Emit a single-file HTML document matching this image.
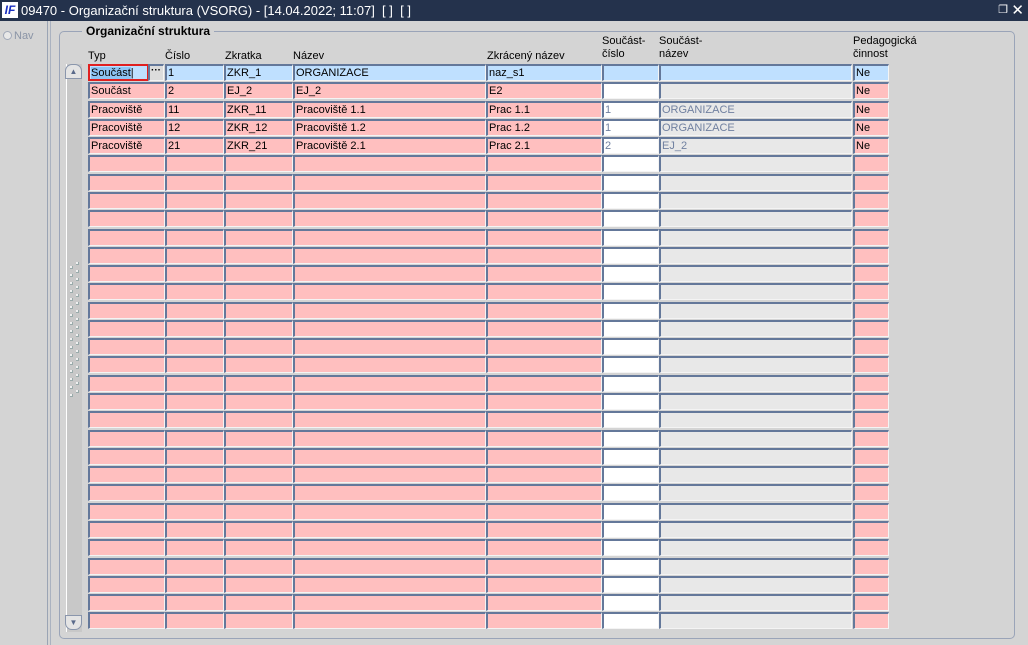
<!DOCTYPE html>
<html><head><meta charset="utf-8">
<style>
*{box-sizing:border-box;margin:0;padding:0}
body{width:1028px;height:645px;background:#d4d4d4;font-family:"Liberation Sans",Arial,sans-serif;font-size:12px;color:#000;position:relative;overflow:hidden}
#tb{position:absolute;left:0;top:0;width:1028px;height:21px;background:#24324c;color:#fff;font-size:13px;line-height:21px}
#logo{position:absolute;left:2px;top:2px;width:16px;height:16px;background:#fff;color:#1a2fc0;font-weight:bold;font-style:italic;font-size:12px;line-height:16px;text-align:center}
#tt{position:absolute;left:21px;top:0}
#lp{position:absolute;left:0;top:21px;width:48px;height:624px;border-right:1px solid #9aa4b4}
#lp2{position:absolute;left:50px;top:21px;width:1px;height:624px;background:#aab2c0}
#nav{position:absolute;left:3px;top:30px;color:#8a94a6;font-size:11px}
#nav i{display:inline-block;width:9px;height:9px;border-radius:50%;border:1px solid #a0a8b8;background:#e8e8e8;vertical-align:-1px;margin-right:2px}
#fr{position:absolute;left:59px;top:31px;width:956px;height:608px;border:1px solid #9aa4b8;border-radius:5px}
#frl{position:absolute;left:82px;top:24px;background:#d4d4d4;padding:0 4px;font-weight:bold;font-size:12px}
.h{position:absolute;font-size:11px;line-height:13px}
#sb{position:absolute;left:66px;top:64px;width:16px;height:568px;background:#c8c8c8;border-left:1px solid #fff}
.sbb{position:absolute;left:65px;width:17px;height:15px;border:1px solid #8a96ac;background:#e4e4e4;color:#5a6a8a;font-size:8px;text-align:center;line-height:13px}
.c{position:absolute;height:17px;border-top:2px solid #64789a;border-left:2px solid #64789a;border-right:1px solid #f4f4f4;border-bottom:1px solid #f4f4f4;line-height:14px;padding-left:1px;white-space:nowrap;overflow:hidden;font-size:11px}
.p{background:#ffbfbf}.b{background:#bfe0ff}.g{background:#e8e8e8}.w{background:#fff}
.gt{color:#7080a0}
.dot{position:absolute;width:3px;height:3px;background:#f0f0f0;border-right:1px solid #9aa;border-bottom:1px solid #9aa}
</style></head><body>
<div id="tb"><div id="logo">IF</div><div id="tt">09470 - Organizační struktura (VSORG) - [14.04.2022; 11:07]&nbsp; [ ]&nbsp; [ ]</div>
<div style="position:absolute;right:20px;top:0;font-size:11px">&#x2750;</div><div style="position:absolute;right:4px;top:0;font-size:15px">✕</div></div>
<div id="lp"></div><div id="lp2"></div>
<div id="nav"><i></i>Nav</div>
<div id="fr"></div>
<div id="frl">Organizační struktura</div>
<div class="h" style="left:88px;top:50px">Typ</div>
<div class="h" style="left:165px;top:50px">Číslo</div>
<div class="h" style="left:225px;top:50px">Zkratka</div>
<div class="h" style="left:293px;top:50px">Název</div>
<div class="h" style="left:487px;top:50px">Zkrácený název</div>
<div class="h" style="left:602px;top:35px">Součást-<br>číslo</div>
<div class="h" style="left:659px;top:35px">Součást-<br>název</div>
<div class="h" style="left:853px;top:35px">Pedagogická<br>činnost</div>
<div id="sb"></div>
<div class="sbb" style="top:64px;border-radius:7px 7px 0 0">▲</div>
<div class="sbb" style="top:615px;border-radius:0 0 7px 7px">▼</div>
<div id="cells">
<div class="c b" style="left:88px;top:64px;width:61px;border:2px solid #e02020;padding-left:1px"><span style="background:#8ec4f4">Součást</span>|</div>
<div class="c" style="left:148px;top:64px;width:16px;background:#dcdcdc;font-weight:bold;font-size:10px;line-height:10px">···</div>
<div class="c b" style="left:165px;top:64px;width:59px">1</div>
<div class="c b" style="left:224px;top:64px;width:69px">ZKR_1</div>
<div class="c b" style="left:293px;top:64px;width:193px">ORGANIZACE</div>
<div class="c b" style="left:486px;top:64px;width:116px">naz_s1</div>
<div class="c b" style="left:602px;top:64px;width:57px"></div>
<div class="c b" style="left:659px;top:64px;width:193px"></div>
<div class="c b" style="left:853px;top:64px;width:36px">Ne</div>
</div>
<script>
var rows=[["Součást","2","EJ_2","EJ_2","E2","",""],["Pracoviště","11","ZKR_11","Pracoviště 1.1","Prac 1.1","1","ORGANIZACE"],["Pracoviště","12","ZKR_12","Pracoviště 1.2","Prac 1.2","1","ORGANIZACE"],["Pracoviště","21","ZKR_21","Pracoviště 2.1","Prac 2.1","2","EJ_2"]];
var cols=[[88,77,'p'],[165,59,'p'],[224,69,'p'],[293,193,'p'],[486,116,'p'],[602,57,'w gt'],[659,193,'g gt'],[853,36,'p']];
var h='';
for(var i=1;i<31;i++){var y=Math.round(64+i*18.28);var r=rows[i-1];
for(var j=0;j<8;j++){var t='';if(r){t=j<7?r[j]:'Ne';}
h+='<div class="c '+cols[j][2]+'" style="left:'+cols[j][0]+'px;top:'+y+'px;width:'+cols[j][1]+'px">'+t+'</div>';}}
for(var k=0;k<17;k++){h+='<div class="dot" style="left:70px;top:'+(266+k*8)+'px"></div><div class="dot" style="left:76px;top:'+(262+k*8)+'px"></div>';}
document.getElementById('cells').insertAdjacentHTML('beforeend',h);
</script>
</body></html>
